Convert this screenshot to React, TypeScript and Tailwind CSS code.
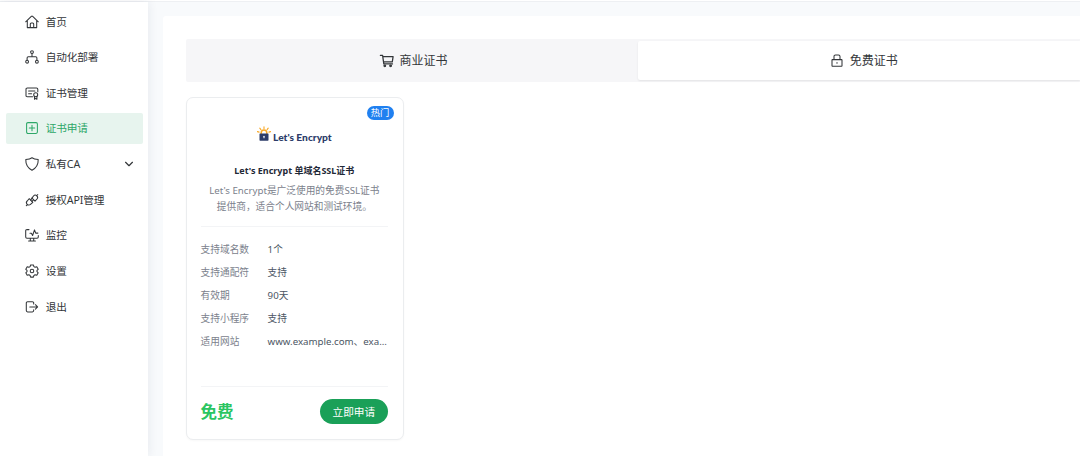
import React from "react";

type IconProps = { className?: string; children: React.ReactNode };

function Glyph({ className = "size-3.5", children }: IconProps) {
  return (
    <svg
      viewBox="0 0 14 14"
      className={`${className} shrink-0 overflow-visible`}
      fill="none"
      stroke="currentColor"
      strokeWidth="1.05"
      strokeLinecap="round"
      strokeLinejoin="round"
    >
      {children}
    </svg>
  );
}

const HomeIcon = () => (
  <Glyph>
    <path d="M.7 6.8 6.3 1.4q.7-.6 1.4 0l5.6 5.4M2.3 5.6v7h9.4v-7M5.3 12.4V8.9q0-1 1-1h1.4q1 0 1 1v3.5" />
  </Glyph>
);
const DeployIcon = () => (
  <Glyph>
    <circle cx="7" cy="2.1" r="1.4" />
    <circle cx="2.1" cy="11.7" r="1.4" />
    <circle cx="11.9" cy="11.7" r="1.4" />
    <path d="M7 3.6v3.2M2.1 10.2V8q0-1.2 1.2-1.2h7.4q1.2 0 1.2 1.2v2.2" />
  </Glyph>
);
const CertIcon = () => (
  <Glyph>
    <path d="M7.6 10.8H2.3Q1 10.8 1 9.5V3.3Q1 2 2.3 2h9.2q1.3 0 1.3 1.3v2.4M3.6 4.9h6.3M3.6 7.7h3" />
    <circle cx="10.7" cy="8.7" r="2" />
    <path d="M9.5 10.6v2.6l1.2-.8 1.2.8v-2.6" />
  </Glyph>
);
const PlusIcon = () => (
  <Glyph>
    <rect x="1.6" y="1.6" width="10.8" height="10.8" rx="1.3" />
    <path d="M7 4.3v5.4M4.3 7h5.4" />
  </Glyph>
);
const ShieldIcon = () => (
  <Glyph>
    <path d="M7 .7C5.4 1.8 3.4 2.3.8 2.6.6 7.5 2 10.7 7 13.3c5-2.6 6.4-5.8 6.2-10.7C10.6 2.3 8.6 1.8 7 .7Z" />
  </Glyph>
);
const PlugIcon = () => (
  <Glyph>
    <path d="M7 5.1 8.5 3a2.3 2.3 0 0 1 3.5 3l-2 2.1Z" />
    <path d="M4.3 5.7 2.2 8a2.3 2.3 0 0 0 3.3 3.4l2.3-2.1Z" />
    <path d="m11.8 2.5 1-1M2.2 11.8l-.9.9M5.6 7.1 7 5.1M7 8.4l1.5-1.6" />
  </Glyph>
);
const MonitorIcon = () => (
  <Glyph>
    <path d="M4 1.6H2Q.7 1.6.7 2.9v6Q.7 10.2 2 10.2h10q1.3 0 1.3-1.3V7.6M5.3 10.3v2.6M8.7 10.3v2.6M3.6 13h6.8M5 5.3h1.4l1.2 2.2 1.9-5.6 1.2 3.2h2.2" />
  </Glyph>
);
const GearIcon = () => (
  <Glyph>
    <path d="M5.6.9h2.8l.5 1.7 1.2.7 1.7-.5 1.4 2.5L12 6.4v1.3l1.2 1.1-1.4 2.4-1.7-.4-1.2.7-.5 1.6H5.6l-.5-1.6-1.2-.7-1.7.4L.8 8.8 2 7.7V6.4L.8 5.3l1.4-2.5 1.7.5 1.2-.7Z" />
    <circle cx="7" cy="7" r="1.8" />
  </Glyph>
);
const ExitIcon = () => (
  <Glyph>
    <path d="M8.7 4V3q0-1.3-1.3-1.3H2.6Q1.3 1.7 1.3 3v7.6q0 1.3 1.3 1.3h4.8q1.3 0 1.3-1.3V9.8M4.8 6.9h7.8M10.4 4.7l2.2 2.2-2.2 2.2" />
  </Glyph>
);
const CartIcon = () => (
  <Glyph>
    <path d="M.4 1.4h2.2l1.2 8.5h8.7M2.9 2.6h10.2l-.8 5.2H3.6" strokeWidth="1.25" />
    <circle cx="4.8" cy="11.8" r=".9" fill="currentColor" />
    <circle cx="10.6" cy="11.8" r=".9" fill="currentColor" />
  </Glyph>
);
const LockIcon = () => (
  <Glyph>
    <rect x="2" y="5.6" width="10" height="6.6" rx=".4" />
    <path d="M4 5.5V2.4Q4 .9 5.5.9h3q1.5 0 1.5 1.5v3.1M7 8.5v.8" />
  </Glyph>
);

const LetsEncryptMark = () => (
  <svg viewBox="0 0 14 16" className="h-4 w-3.5 shrink-0">
    <path
      d="M7 .7v2M2.8 2.1l1.1 1.5M11.2 2.1l-1.1 1.5M.4 5.6l1.7.5M13.6 5.6l-1.7.5"
      stroke="#f9a825"
      strokeWidth="1.1"
      strokeLinecap="round"
    />
    <path d="M4.2 8V6.9a2.8 2.8 0 0 1 5.6 0V8" fill="none" stroke="#f9a825" strokeWidth="1.5" />
    <rect x="2.5" y="7.5" width="9" height="7.2" rx=".6" fill="#2c3c69" />
    <path d="M7 10.2v1.5" stroke="#fff" strokeWidth="1.1" strokeLinecap="round" />
  </svg>
);

const menu = [
  { label: "首页", icon: <HomeIcon /> },
  { label: "自动化部署", icon: <DeployIcon /> },
  { label: "证书管理", icon: <CertIcon /> },
  { label: "证书申请", icon: <PlusIcon />, active: true },
  { label: "私有CA", icon: <ShieldIcon />, expandable: true },
  { label: "授权API管理", icon: <PlugIcon /> },
  { label: "监控", icon: <MonitorIcon /> },
  { label: "设置", icon: <GearIcon /> },
  { label: "退出", icon: <ExitIcon /> },
];

const details = [
  ["支持域名数", "1个"],
  ["支持通配符", "支持"],
  ["有效期", "90天"],
  ["支持小程序", "支持"],
  ["适用网站", "www.example.com、exa..."],
];

function Sidebar() {
  return (
    <aside className="w-[148px] shrink-0 bg-white px-1.5 pt-[4px] shadow-[0_0_10px_rgba(30,41,80,0.09)]">
      <nav className="flex flex-col gap-[4.65px]">
        {menu.map((item) => (
          <a
            key={item.label}
            className={`flex h-[31px] w-[137px] items-center rounded-[2px] pr-[8px] pl-[19px] text-[10.67px] tracking-[-0.15px] ${
              item.active ? "bg-[#e7f4ee] text-[#2da768]" : "text-[#333639]"
            }`}
          >
            {item.icon}
            <span className="ml-[6.8px] flex-1 whitespace-nowrap">{item.label}</span>
            {item.expandable && (
              <Glyph className="size-3">
                <path d="m3 5 4 4 4-4" strokeWidth="1.4" />
              </Glyph>
            )}
          </a>
        ))}
      </nav>
    </aside>
  );
}

function CertificateCard() {
  return (
    <article className="relative mt-[15px] flex h-[343px] w-[218px] flex-col rounded-[7px] border border-[#ebedef] bg-white pr-[14.5px] pl-[14px] shadow-[0_1px_2px_rgba(0,0,0,0.03)]">
      <span className="absolute top-[8px] right-[9px] flex h-3.5 w-[27px] items-center justify-center rounded-full bg-[#2080f0] text-[9.3px] text-white">
        热门
      </span>
      <div className="mt-[28px] flex h-4 items-center justify-center gap-[2px]">
        <LetsEncryptMark />
        <span className="pt-[7px] font-['Lato','Noto_Sans',sans-serif] text-[10.2px] leading-none font-black whitespace-nowrap text-[#2c3c69]">
          Let's Encrypt
        </span>
      </div>
      <h2 className="mt-[21px] text-center text-[9px] leading-4 font-bold whitespace-nowrap text-[#1f2937]">
        Let's Encrypt 单域名SSL证书
      </h2>
      <p className="mt-[4px] text-center text-[9.7px] leading-4 whitespace-nowrap text-[#7b818c]">
        Let's Encrypt是广泛使用的免费SSL证书
        <br />
        提供商，适合个人网站和测试环境。
      </p>
      <dl className="mt-[11px] flex flex-col border-t border-[#f3f4f6] pt-[12px] text-[9.7px]">
        {details.map(([label, value]) => (
          <div key={label} className="flex h-[23px] items-center whitespace-nowrap">
            <dt className="w-[67px] shrink-0 text-[#7b818c]">{label}</dt>
            <dd className="text-[#4b5563]">{value}</dd>
          </div>
        ))}
      </dl>
      <footer className="mt-auto flex h-[53px] items-center justify-between border-t border-[#f3f4f6] pb-[3px]">
        <strong className="pt-px text-[16.5px] leading-none font-bold text-[#2bc562]">免费</strong>
        <button className="h-[25px] w-[68.5px] rounded-full bg-[#1aa058] text-[10.67px] text-white">
          立即申请
        </button>
      </footer>
    </article>
  );
}

export default function App() {
  return (
    <div className="flex h-[456px] w-[1080px] flex-col overflow-hidden bg-[#f8fafc] font-['Noto_Sans','Noto_Sans_CJK_SC',sans-serif]">
      <div className="h-[2px] shrink-0 border-b border-[#eef0f3] bg-white" />
      <div className="flex min-h-0 flex-1">
        <Sidebar />
        <main className="mt-[14px] ml-[15px] flex-1 rounded-tl-[3px] bg-white pt-[23px] pl-[22.6px]">
          <div className="flex h-[43px] rounded-l-[2px] bg-[#f6f6f8] py-[2px] text-[12px] text-[#333639]">
            <button className="flex w-[452px] items-center justify-center gap-[6px] pl-[4px]">
              <CartIcon />
              商业证书
            </button>
            <button className="flex flex-1 items-center justify-center gap-[6px] rounded-l-[2px] bg-white pl-[10px] shadow-[0_1px_2px_rgba(0,0,0,0.08)]">
              <LockIcon />
              免费证书
            </button>
          </div>
          <CertificateCard />
        </main>
      </div>
    </div>
  );
}
